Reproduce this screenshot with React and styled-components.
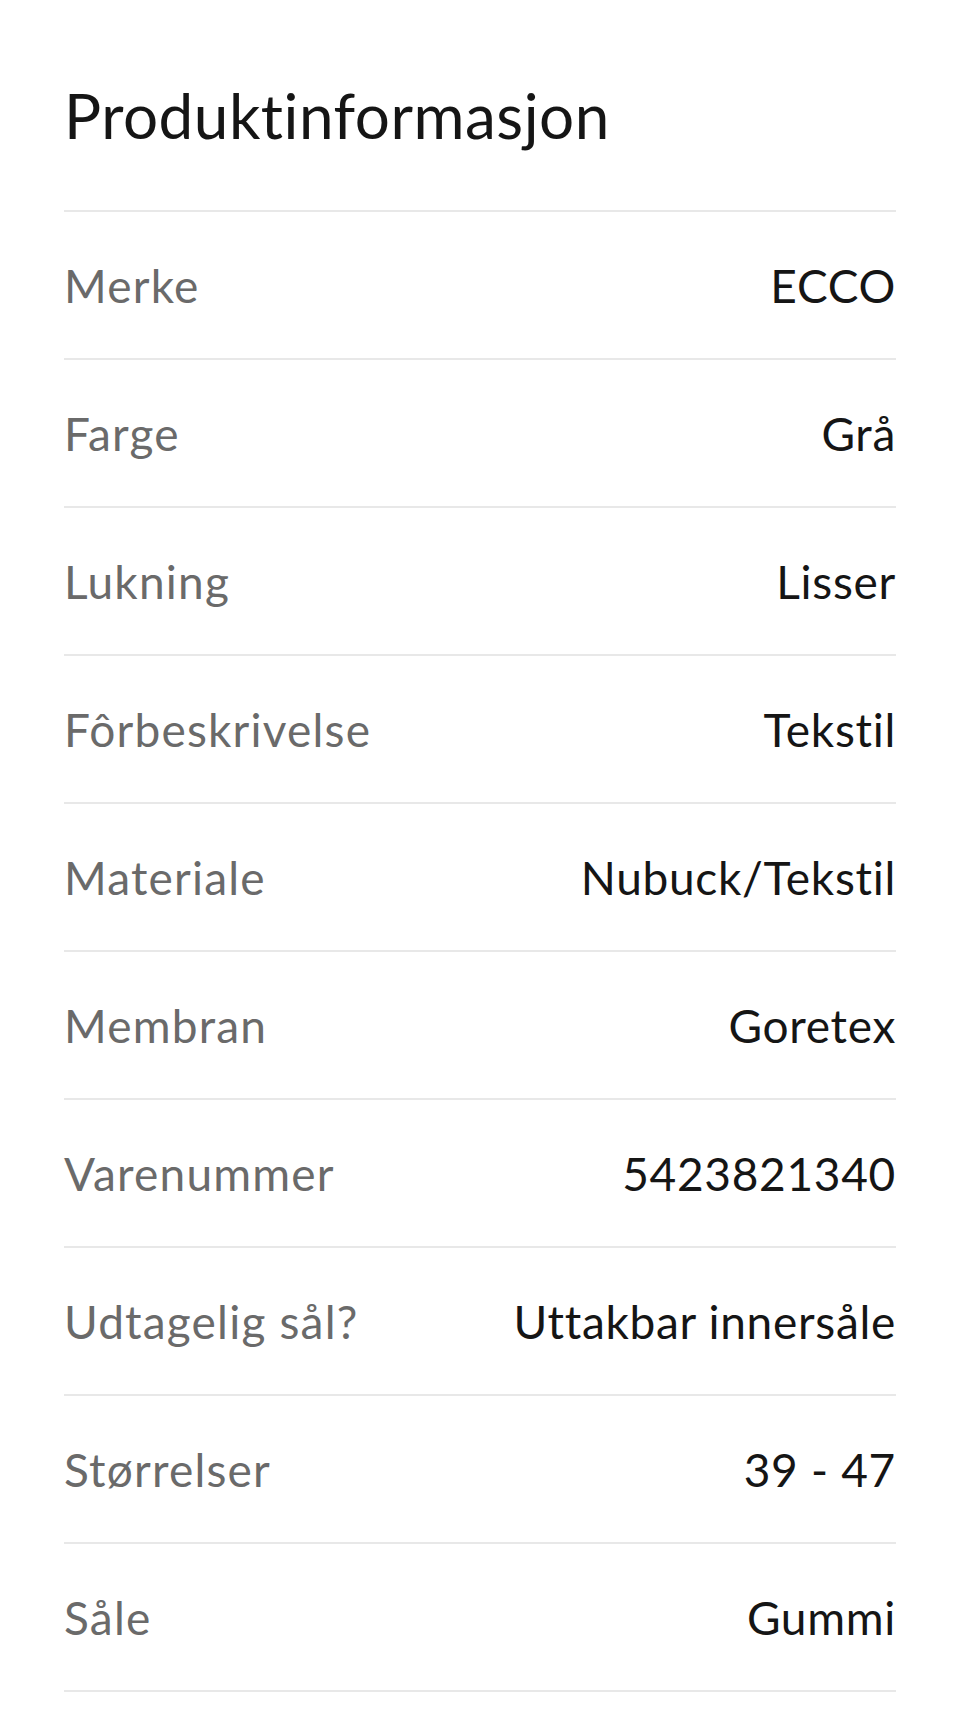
import React from "react";
import styled, { createGlobalStyle } from "styled-components";

const GlobalStyle = createGlobalStyle`
  html, body { margin: 0; padding: 0; background: #ffffff; }
  body { font-family: Lato, "Open Sans", "Liberation Sans", sans-serif; -webkit-font-smoothing: antialiased; }
  * { box-sizing: border-box; }
`;

const Page = styled.main`
  padding: 0 64px;
  min-height: 1727px;
  background: #fff;
`;

const Title = styled.h2`
  margin: 0;
  padding-top: 78px;
  height: 210px;
  font-size: 62px;
  line-height: 1.2;
  font-weight: 400;
  color: #151515;
  letter-spacing: 0.5px;
`;

const List = styled.dl`
  margin: 0;
  border-top: 2px solid #e8e8e8;
`;

const Row = styled.div`
  display: flex;
  align-items: center;
  justify-content: space-between;
  height: 148px;
  border-bottom: 2px solid #e8e8e8;
`;

const Label = styled.dt`
  margin: 0;
  font-size: 46px;
  letter-spacing: 1.2px;
  color: #6a6a6a;
`;

const Value = styled.dd`
  margin: 0;
  font-size: 46px;
  letter-spacing: 0.7px;
  color: #151515;
  text-align: right;
`;

const data = [
  ["Merke", "ECCO"],
  ["Farge", "Grå"],
  ["Lukning", "Lisser"],
  ["Fôrbeskrivelse", "Tekstil"],
  ["Materiale", "Nubuck/Tekstil"],
  ["Membran", "Goretex"],
  ["Varenummer", "5423821340"],
  ["Udtagelig sål?", "Uttakbar innersåle"],
  ["Størrelser", "39 - 47"],
  ["Såle", "Gummi"],
];

export default function App() {
  return (
    <>
      <GlobalStyle />
      <Page>
        <Title>Produktinformasjon</Title>
        <List>
          {data.map(([k, v]) => (
            <Row key={k}>
              <Label>{k}</Label>
              <Value>{v}</Value>
            </Row>
          ))}
        </List>
      </Page>
    </>
  );
}
